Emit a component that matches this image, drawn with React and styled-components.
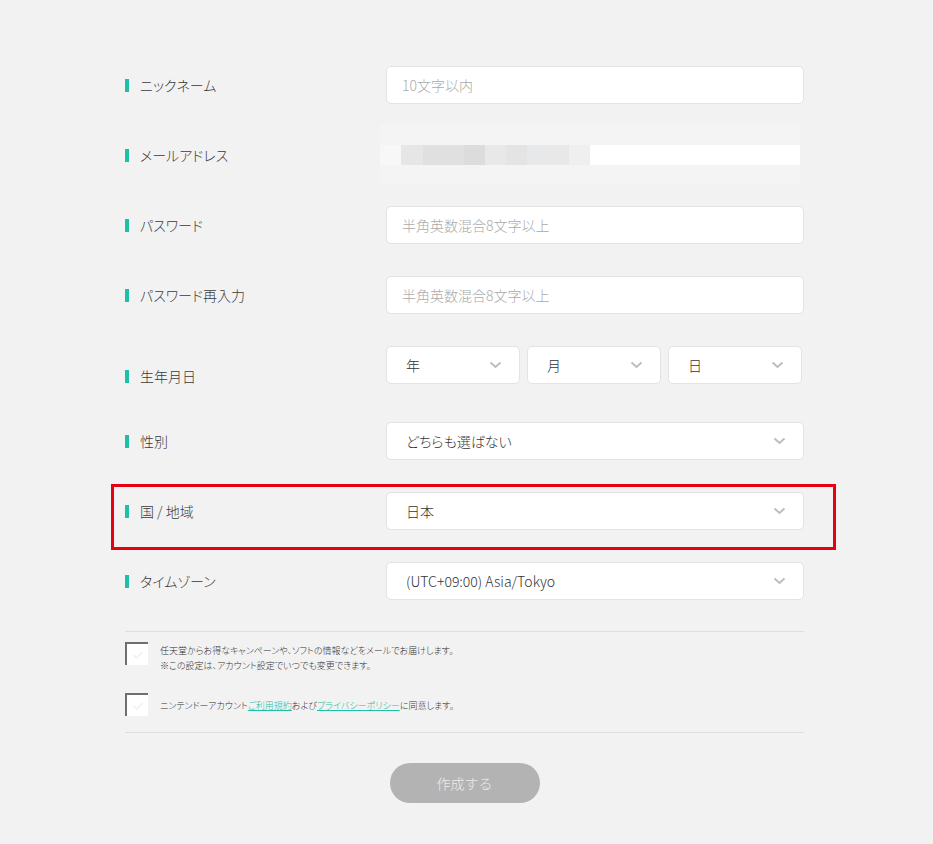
import React from 'react';
import styled, { createGlobalStyle } from 'styled-components';

const GlobalStyle = createGlobalStyle`
    body {
        margin: 0;
        background: #f2f2f2;
        font-family: "Noto Sans CJK JP", "Noto Sans", sans-serif;
        font-feature-settings: "palt";
        font-weight: 300;
        color: #333;
    }
`;

const Page = styled.div`
    padding: 50px 0 40px 125px;
`;

const Form = styled.div`
    width: 679px;
`;

const Row = styled.div`
    position: relative;
    display: grid;
    grid-template-columns: 261px 418px;
    align-items: center;
    padding: ${p => p.$pad || '16px 0'};
    min-height: ${p => p.$min || '38px'};
`;

const Label = styled.div`
    display: flex;
    align-items: center;
    gap: 11px;
    font-size: 14px;
    color: #3a3a3a;
    &::before {
        content: '';
        width: 4px;
        height: 13px;
        background: #1dbfa5;
    }
`;

const TextInput = styled.input`
    box-sizing: border-box;
    width: 418px;
    height: 38px;
    border: 1px solid #e3e3e3;
    border-radius: 5px;
    background: #fff;
    padding: 0 15px;
    font-family: inherit;
    font-weight: 300;
    font-size: 14px;
    color: #333;
    outline: none;
    &::placeholder {
        color: #aaa;
    }
`;

const SelectBox = styled.div`
    box-sizing: border-box;
    width: ${p => p.$w || '418px'};
    height: 38px;
    border: 1px solid #e3e3e3;
    border-radius: 5px;
    background: #fff;
    padding: 0 17px 0 19px;
    display: flex;
    align-items: center;
    justify-content: space-between;
    font-size: 14px;
    color: #333;
`;

const DateGroup = styled.div`
    display: flex;
    gap: 7px;
    align-self: start;
`;

const Masked = styled.div`
    margin-left: -6px;
    width: 420px;
    height: 60px;
    background: #f4f4f4;
    display: flex;
    flex-direction: column;
    justify-content: center;
`;

const MaskStrip = styled.div`
    display: flex;
    height: 20px;
    background: #fff;
`;

const MaskBlock = styled.div`
    width: ${p => p.$w}px;
    background: ${p => p.$c};
`;

const Highlight = styled.div`
    position: absolute;
    left: -14px;
    right: -32px;
    top: 8px;
    bottom: -4px;
    border: 3px solid #e60012;
    pointer-events: none;
`;

const Divider = styled.div`
    height: 1px;
    background: #dedede;
    margin: ${p => p.$m || '0'};
`;

const CheckRow = styled.div`
    display: flex;
    align-items: ${p => p.$align || 'flex-start'};
    gap: 12px;
    margin: ${p => p.$m || '0'};
`;

const CheckBox = styled.div`
    width: 23px;
    height: 23px;
    flex: none;
    box-sizing: border-box;
    background: #fff;
    border-top: 2px solid #6f6f6f;
    border-left: 2px solid #6f6f6f;
    display: flex;
    align-items: center;
    justify-content: center;
`;

const CheckText = styled.div`
    font-size: 9px;
    line-height: 15px;
    color: #333;
    padding-top: 1px;
`;

const Link = styled.a`
    color: #1dbfa5;
    text-decoration: underline;
`;

const ButtonWrap = styled.div`
    display: flex;
    justify-content: center;
    padding-top: 30px;
`;

const SubmitButton = styled.button`
    width: 150px;
    height: 40px;
    border: none;
    border-radius: 20px;
    background: #b3b3b3;
    color: #ececec;
    font-family: inherit;
    font-weight: 300;
    font-size: 14px;
    cursor: default;
`;

const Chevron = () => (
    <svg width="13" height="8" viewBox="0 0 13 8">
        <polyline points="1.5,1.5 6.5,6 11.5,1.5" fill="none" stroke="#bdbdbd" strokeWidth="2" />
    </svg>
);

const Check = () => (
    <svg width="12" height="10" viewBox="0 0 12 10">
        <polyline points="1.5,5 4.5,8 10.5,2" fill="none" stroke="#f0f0f0" strokeWidth="1.6" />
    </svg>
);

const maskBlocks = [
    [21, '#f7f7f7'], [22, '#e6e6e6'], [41, '#e0e0e0'], [21, '#dcdcdc'],
    [21, '#e8e8e8'], [21, '#e4e4e4'], [21, '#e6e8ea'], [21, '#e8e8e8'], [21, '#efefef'],
];

function Select({ value, width }) {
    return (
        <SelectBox $w={width}>
            <span>{value}</span>
            <Chevron />
        </SelectBox>
    );
}

export default function App() {
    return (
        <Page>
            <GlobalStyle />
            <Form>
                <Row>
                    <Label>ニックネーム</Label>
                    <TextInput placeholder="10文字以内" />
                </Row>
                <Row $pad="5px 0" $min="60px">
                    <Label>メールアドレス</Label>
                    <Masked>
                        <MaskStrip>
                            {maskBlocks.map(([w, c], i) => <MaskBlock key={i} $w={w} $c={c} />)}
                        </MaskStrip>
                    </Masked>
                </Row>
                <Row>
                    <Label>パスワード</Label>
                    <TextInput type="text" placeholder="半角英数混合8文字以上" />
                </Row>
                <Row>
                    <Label>パスワード再入力</Label>
                    <TextInput type="text" placeholder="半角英数混合8文字以上" />
                </Row>
                <Row $pad="16px 0 0" $min="60px">
                    <Label>生年月日</Label>
                    <DateGroup>
                        <Select value="年" width="134px" />
                        <Select value="月" width="134px" />
                        <Select value="日" width="134px" />
                    </DateGroup>
                </Row>
                <Row>
                    <Label>性別</Label>
                    <Select value="どちらも選ばない" />
                </Row>
                <Row>
                    <Label>国 / 地域</Label>
                    <Select value="日本" />
                    <Highlight />
                </Row>
                <Row>
                    <Label>タイムゾーン</Label>
                    <Select value="(UTC+09:00) Asia/Tokyo" />
                </Row>
                <Divider $m="15px 0 10px" />
                <CheckRow>
                    <CheckBox><Check /></CheckBox>
                    <CheckText>
                        任天堂からお得なキャンペーンや、ソフトの情報などをメールでお届けします。<br />
                        ※この設定は、アカウント設定でいつでも変更できます。
                    </CheckText>
                </CheckRow>
                <CheckRow $align="center" $m="20px 0 16px">
                    <CheckBox><Check /></CheckBox>
                    <CheckText>
                        ニンテンドーアカウント<Link>ご利用規約</Link>および<Link>プライバシーポリシー</Link>に同意します。
                    </CheckText>
                </CheckRow>
                <Divider />
                <ButtonWrap>
                    <SubmitButton>作成する</SubmitButton>
                </ButtonWrap>
            </Form>
        </Page>
    );
}
